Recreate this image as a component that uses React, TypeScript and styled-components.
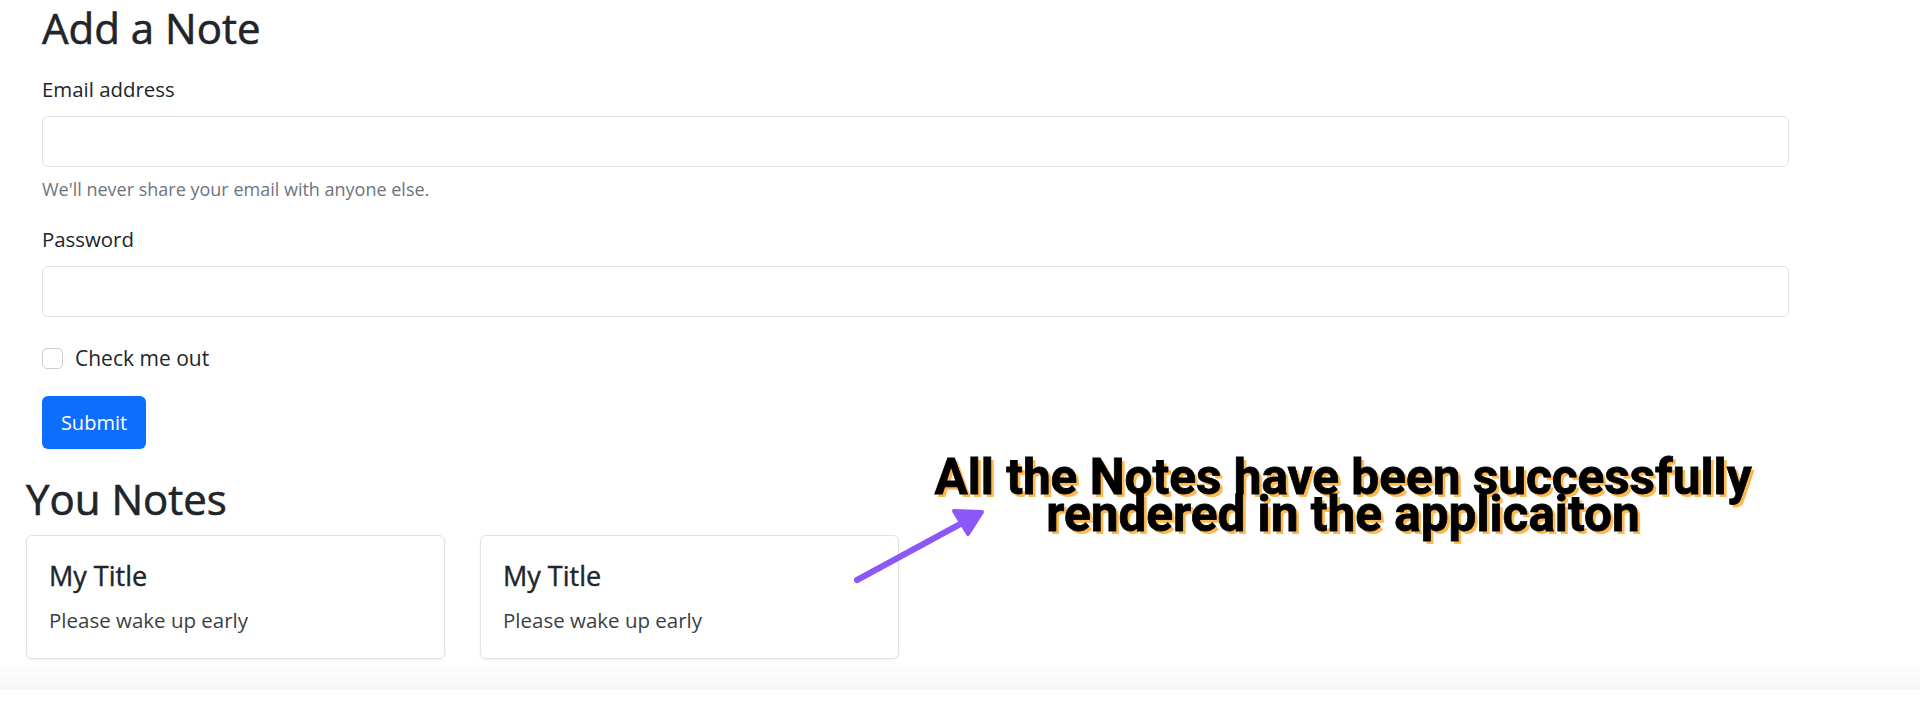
import React from 'react'
import styled, { createGlobalStyle } from 'styled-components'

const GlobalStyle = createGlobalStyle`
  * { box-sizing: border-box; }
  body {
    margin: 0;
    font-family: "Open Sans", "Noto Sans", sans-serif;
    color: #212529;
    background: #fff;
  }
`

const Page = styled.div`
  position: relative;
  width: 1920px;
  height: 704px;
  overflow: hidden;
  background: linear-gradient(to bottom, #fff 0, #fff 660px, #f6f6f6 690px, #fff 690px);
`

const Container = styled.div`
  width: 1789px;
  padding: 3px 0 0 42px;
  display: flex;
  flex-direction: column;
`

const Heading = styled.h2<{ $shift?: number }>`
  margin: 0 0 0 ${(p) => (p.$shift ? -p.$shift : 0)}px;
  font-size: 42px;
  line-height: 50px;
  font-weight: 500;
  color: #212529;
  -webkit-text-stroke: 0.6px #212529;
`

const Label = styled.label`
  display: block;
  margin-top: 21px;
  font-size: 20.4px;
  line-height: 30px;
`

const Input = styled.input`
  display: block;
  width: 100%;
  height: 51px;
  margin-top: 12px;
  border: 1px solid #dee2e6;
  border-radius: 6px;
  background: #fff;
  outline: none;
  font: inherit;
`

const Help = styled.div`
  margin-top: 9px;
  font-size: 18px;
  line-height: 27px;
  color: #6c757d;
`

const CheckRow = styled.div`
  display: flex;
  align-items: center;
  gap: 12px;
  height: 21px;
  margin-top: 31px;
`

const Check = styled.input`
  appearance: none;
  width: 21px;
  height: 21px;
  margin: 0;
  border: 1px solid #c9ccd0;
  border-radius: 5px;
  background: #fff;
`

const CheckLabel = styled.span`
  font-size: 21px;
  line-height: 21px;
`

const Submit = styled.button`
  align-self: flex-start;
  width: 104px;
  height: 53px;
  margin-top: 27px;
  border: none;
  border-radius: 6px;
  background: #0d6efd;
  color: #fff;
  font-family: inherit;
  font-size: 20px;
`

const NotesHead = styled.div`
  margin-top: 25px;
`

const Cards = styled.div`
  display: flex;
  gap: 35px;
  margin-top: 11px;
  margin-left: -16px;
`

const Card = styled.div`
  width: 419px;
  height: 124px;
  padding: 24px 22px 22px;
  border: 1px solid #e2e2e2;
  border-radius: 6px;
  background: #fff;
  box-shadow: 0 1px 3px rgba(0, 0, 0, 0.06);
`

const CardTitle = styled.h5`
  margin: 0;
  font-size: 27px;
  line-height: 32px;
  font-weight: 500;
  color: #212529;
  -webkit-text-stroke: 0.4px #212529;
`

const CardText = styled.p`
  margin: 14px 0 0;
  font-size: 20.5px;
  line-height: 28px;
  color: #3b3f44;
`

const Callout = styled.div`
  position: absolute;
  left: 843px;
  top: 459px;
  width: 1000px;
  text-align: center;
  font-family: Roboto, "Liberation Sans", sans-serif;
  font-weight: 700;
  font-size: 49.5px;
  line-height: 37px;
  color: #000;
  -webkit-text-stroke: 0.8px #000;
  text-shadow: 3px 3px 0 #ffb74f;
`

const Arrow = styled.svg`
  position: absolute;
  left: 840px;
  top: 495px;
`

const notes = [
  { title: 'My Title', text: 'Please wake up early' },
  { title: 'My Title', text: 'Please wake up early' },
]

export default function App() {
  return (
    <Page>
      <GlobalStyle />
      <Container>
        <Heading>Add a Note</Heading>
        <Label htmlFor="email">Email address</Label>
        <Input id="email" type="email" />
        <Help>We'll never share your email with anyone else.</Help>
        <Label htmlFor="password">Password</Label>
        <Input id="password" type="password" />
        <CheckRow>
          <Check type="checkbox" />
          <CheckLabel>Check me out</CheckLabel>
        </CheckRow>
        <Submit>Submit</Submit>
        <NotesHead>
          <Heading $shift={16}>You Notes</Heading>
        </NotesHead>
        <Cards>
          {notes.map((n, i) => (
            <Card key={i}>
              <CardTitle>{n.title}</CardTitle>
              <CardText>{n.text}</CardText>
            </Card>
          ))}
        </Cards>
      </Container>

      <Callout>
        All the Notes have been successfully
        <br />
        rendered in the applicaiton
      </Callout>

      <Arrow width="160" height="100" viewBox="0 0 160 100">
        <line x1="17" y1="85" x2="124" y2="27" stroke="#8b57f7" strokeWidth="6" strokeLinecap="round" />
        <polygon
          points="114,16 142,17 128,39"
          fill="#8b57f7"
          stroke="#8b57f7"
          strokeWidth="4"
          strokeLinejoin="round"
        />
      </Arrow>
    </Page>
  )
}
